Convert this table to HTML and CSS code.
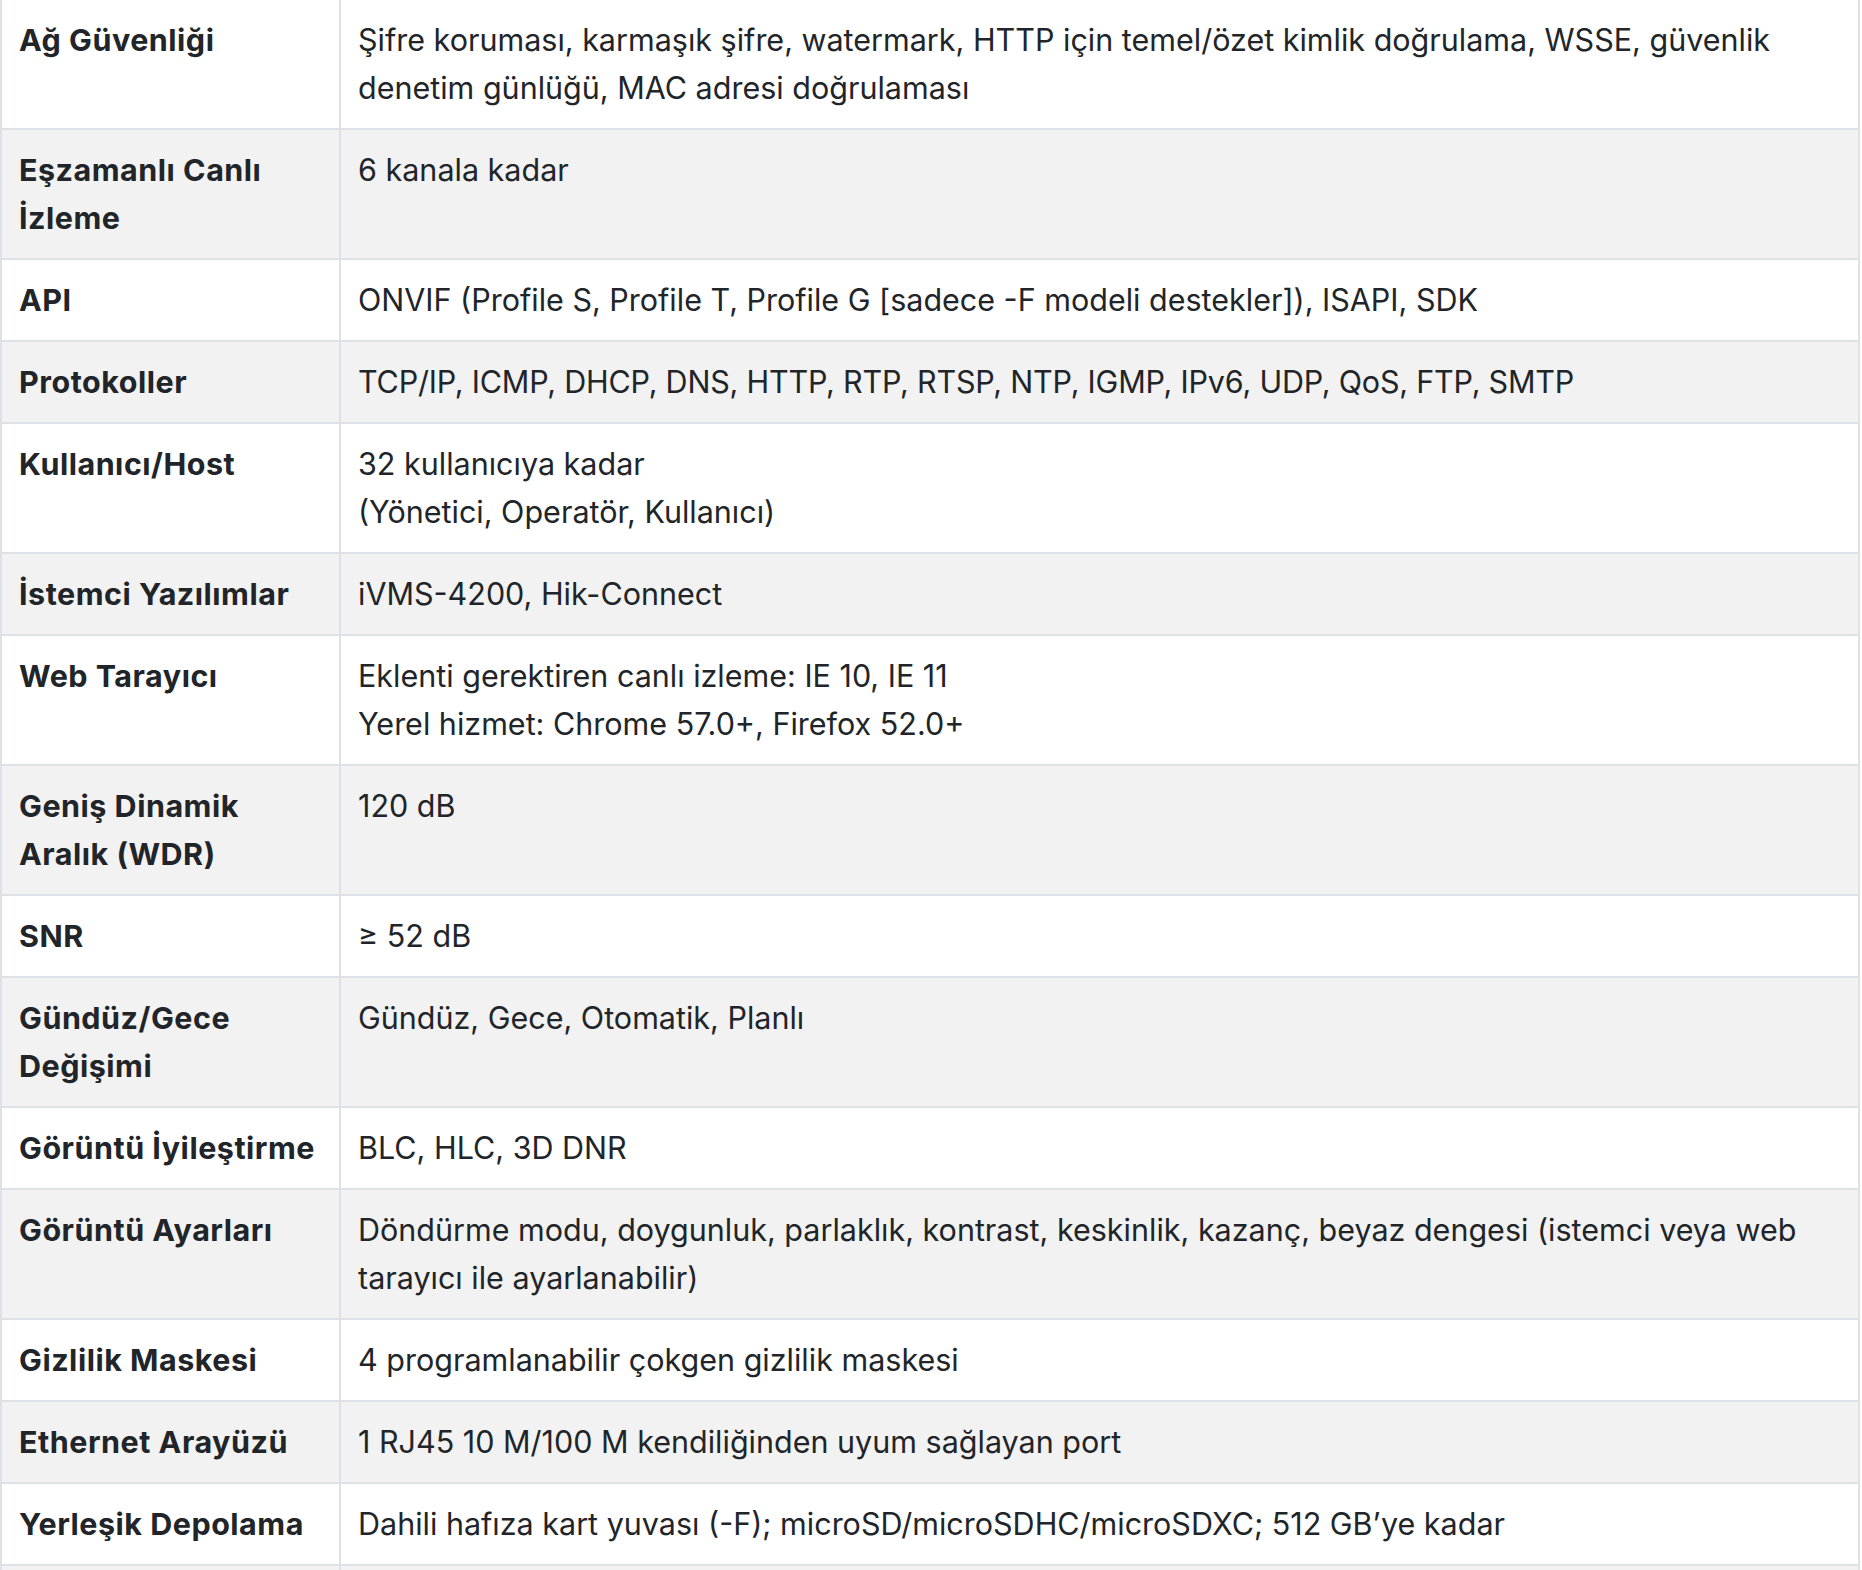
FILE: index.html
```html
<!DOCTYPE html>
<html lang="tr">
<head>
<meta charset="utf-8">
<title>Teknik Özellikler</title>
<link rel="stylesheet" href="styles.css">
</head>
<body>
<table class="specs">
  <tbody>
    <tr><td class="key">Ağ Güvenliği</td><td class="val">Şifre koruması, karmaşık şifre, watermark, HTTP için temel/özet kimlik doğrulama, WSSE, güvenlik denetim günlüğü, MAC adresi doğrulaması</td></tr>
    <tr><td class="key">Eşzamanlı Canlı İzleme</td><td class="val">6 kanala kadar</td></tr>
    <tr><td class="key">API</td><td class="val">ONVIF (Profile S, Profile T, Profile G [sadece -F modeli destekler]), ISAPI, SDK</td></tr>
    <tr><td class="key">Protokoller</td><td class="val caps">TCP/IP, ICMP, DHCP, DNS, HTTP, RTP, RTSP, NTP, IGMP, IPv6, UDP, QoS, FTP, SMTP</td></tr>
    <tr><td class="key">Kullanıcı/Host</td><td class="val">32 kullanıcıya kadar<br>(Yönetici, Operatör, Kullanıcı)</td></tr>
    <tr><td class="key">İstemci Yazılımlar</td><td class="val">iVMS-4200, Hik-Connect</td></tr>
    <tr><td class="key">Web Tarayıcı</td><td class="val">Eklenti gerektiren canlı izleme: IE 10, IE 11<br>Yerel hizmet: Chrome 57.0+, Firefox 52.0+</td></tr>
    <tr><td class="key">Geniş Dinamik Aralık (WDR)</td><td class="val">120 dB</td></tr>
    <tr><td class="key">SNR</td><td class="val">≥ 52 dB</td></tr>
    <tr><td class="key">Gündüz/Gece Değişimi</td><td class="val">Gündüz, Gece, Otomatik, Planlı</td></tr>
    <tr><td class="key">Görüntü İyileştirme</td><td class="val">BLC, HLC, 3D DNR</td></tr>
    <tr><td class="key">Görüntü Ayarları</td><td class="val">Döndürme modu, doygunluk, parlaklık, kontrast, keskinlik, kazanç, beyaz dengesi (istemci veya web tarayıcı ile ayarlanabilir)</td></tr>
    <tr><td class="key">Gizlilik Maskesi</td><td class="val">4 programlanabilir çokgen gizlilik maskesi</td></tr>
    <tr><td class="key">Ethernet Arayüzü</td><td class="val">1 RJ45 10 M/100 M kendiliğinden uyum sağlayan port</td></tr>
    <tr><td class="key">Yerleşik Depolama</td><td class="val">Dahili hafıza kart yuvası (-F); microSD/microSDHC/microSDXC; 512 GB’ye kadar</td></tr>
    <tr><td class="key">&nbsp;</td><td class="val">&nbsp;</td></tr>
  </tbody>
</table>
</body>
</html>
```
FILE: styles.css
```css
html, body {
  margin: 0;
  padding: 0;
  background: #ffffff;
}

body {
  font-family: Inter, "Noto Sans", sans-serif;
  font-size: 30.5px;
  line-height: 48px;
  color: #212529;
}

.specs {
  width: 1860px;
  border-collapse: separate;
  border-spacing: 0;
  table-layout: fixed;
  border-left: 2px solid #dee2e6;
}

.specs td {
  box-sizing: border-box;
  padding: 16px 17px;
  vertical-align: top;
  text-align: left;
  border-right: 2px solid #dee2e6;
  border-bottom: 2px solid #dee2e6;
}

.specs .key {
  width: 339px;
  font-weight: 700;
  letter-spacing: 0.5px;
}

.specs .caps {
  letter-spacing: -0.2px;
}

.specs tr:nth-child(even) td {
  background: #f2f2f2;
}
```
